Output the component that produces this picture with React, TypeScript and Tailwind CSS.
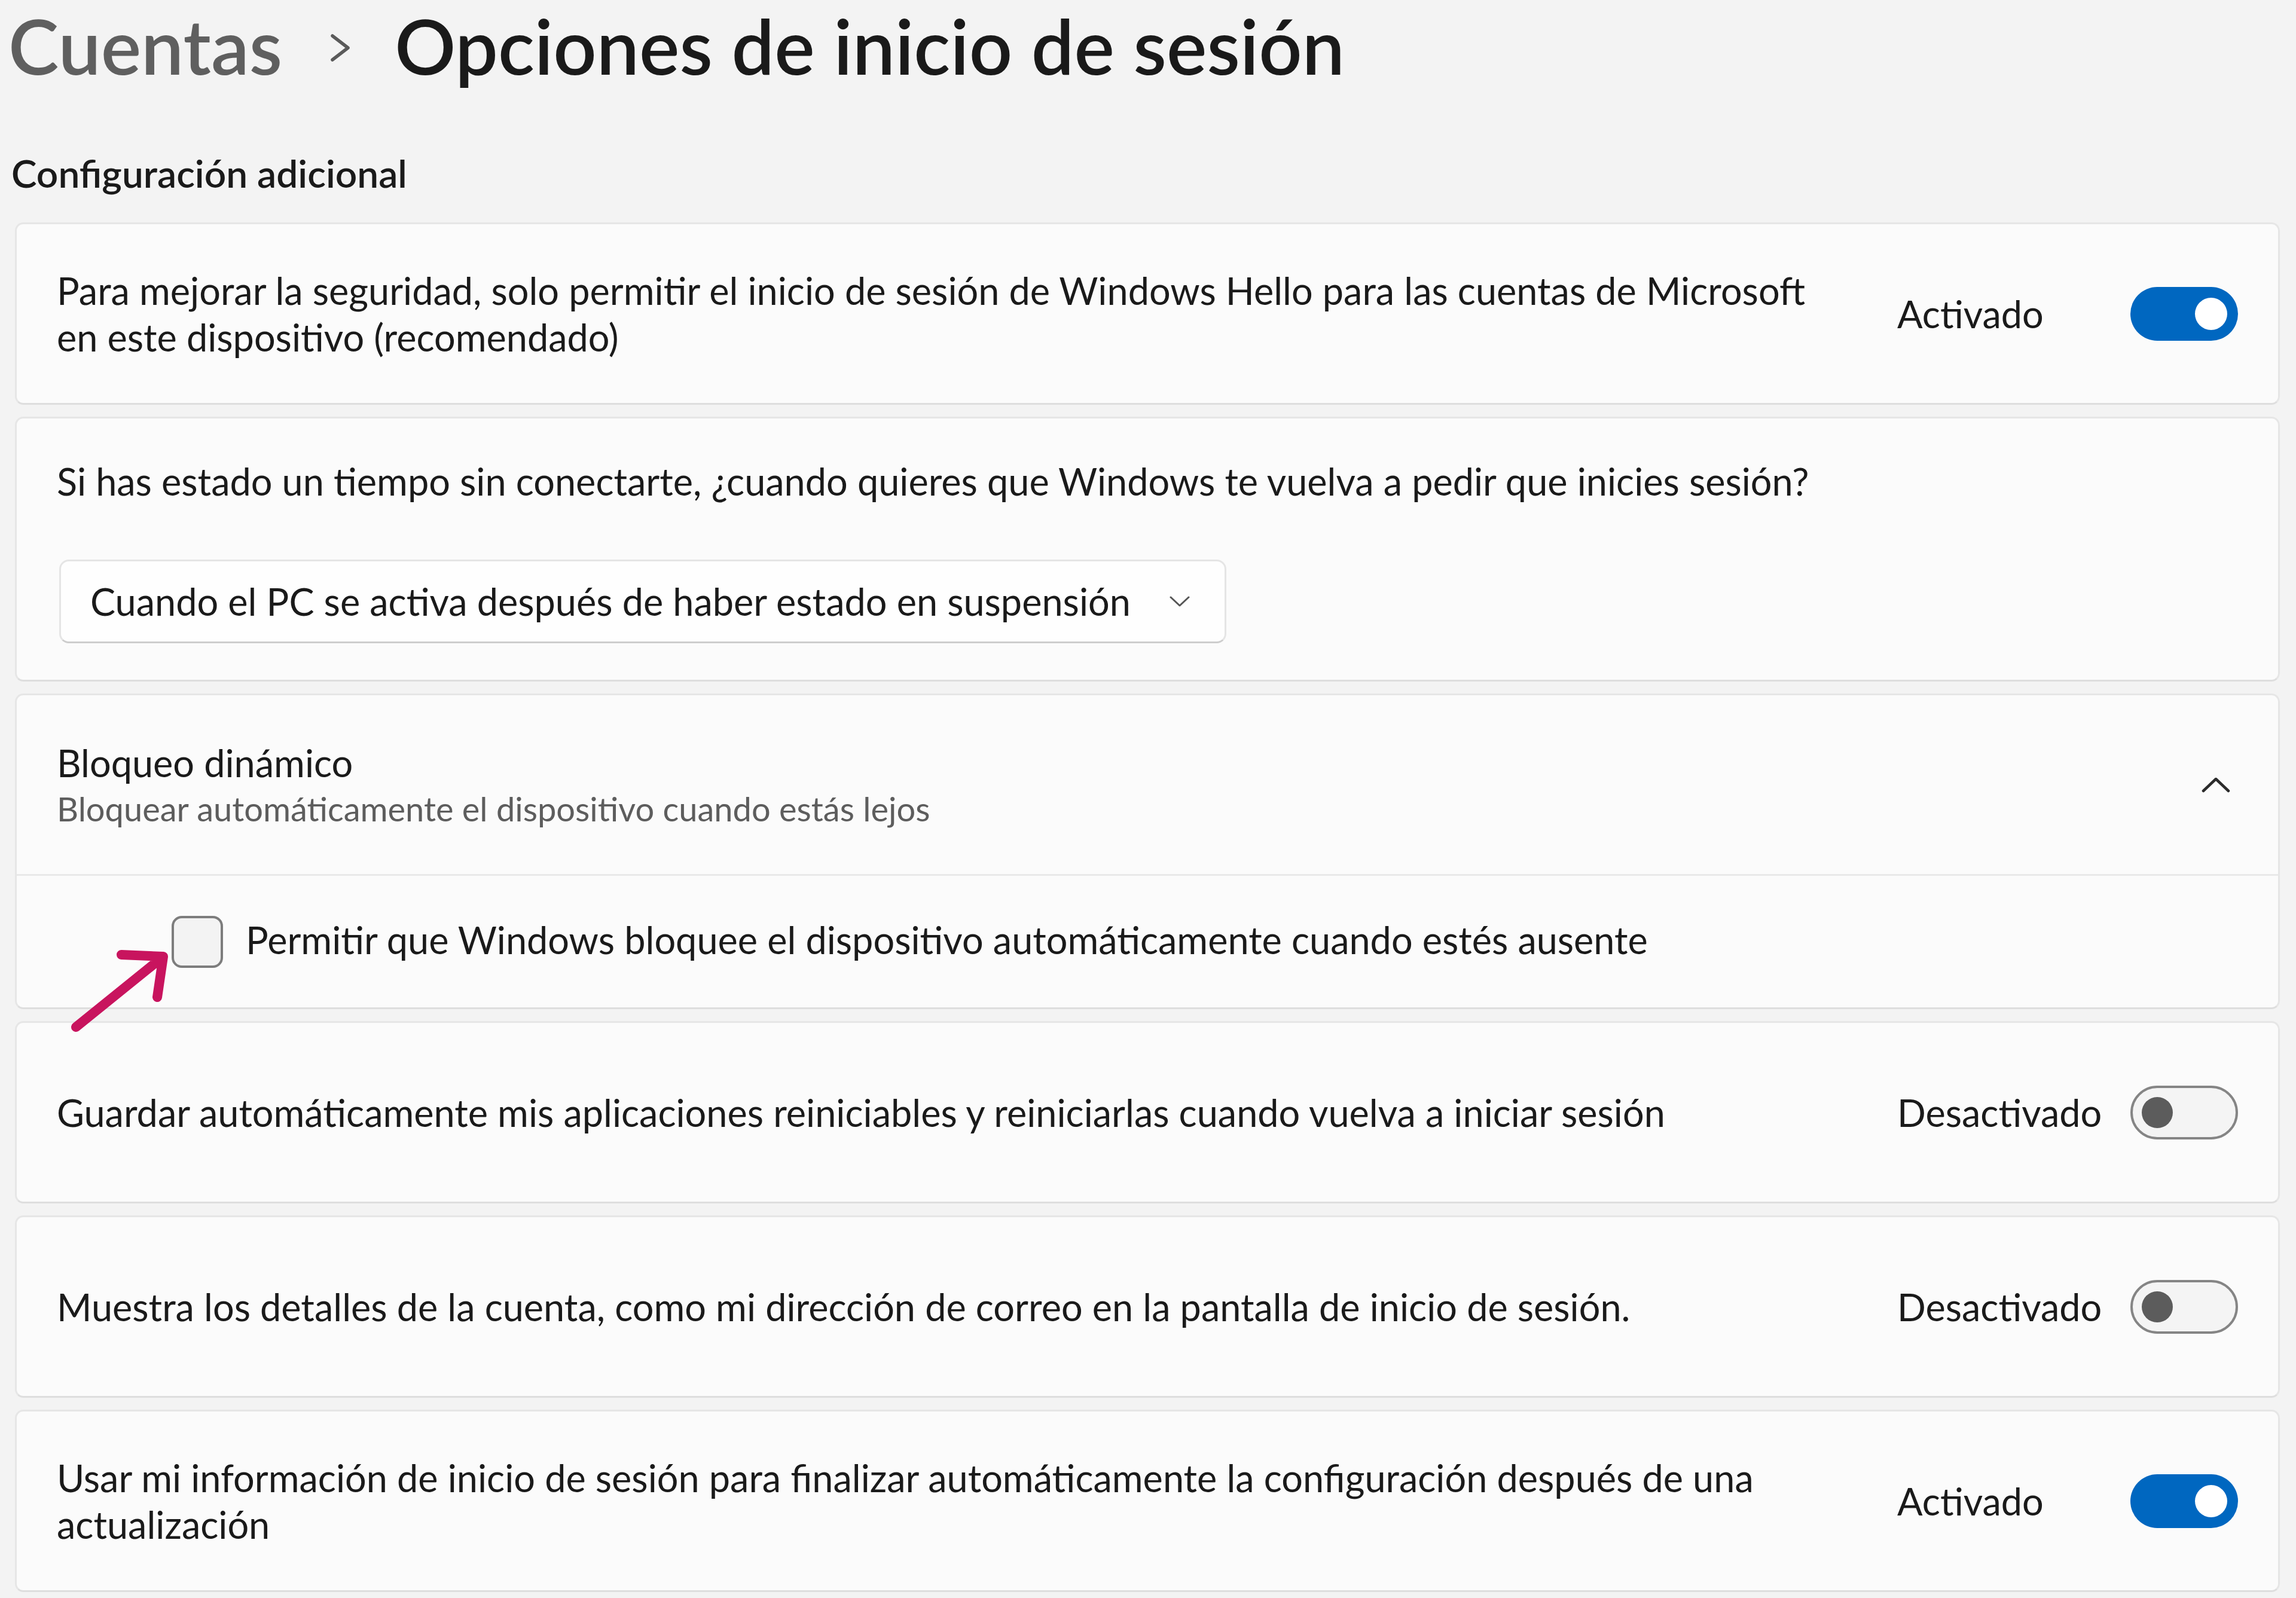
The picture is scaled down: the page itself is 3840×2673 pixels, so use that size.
function Toggle({ on }: { on: boolean }) {
  if (on) {
    return (
      <div className="flex h-[90px] w-[180px] items-center justify-end rounded-full bg-[#0067c0] pr-[18px]">
        <div className="h-[54px] w-[54px] rounded-full bg-white" />
      </div>
    )
  }
  return (
    <div className="flex h-[90px] w-[180px] items-center rounded-full border-[4px] border-[#858585] bg-[#f4f4f4] pl-[15px]">
      <div className="h-[52px] w-[52px] rounded-full bg-[#5c5c5c]" />
    </div>
  )
}

function ToggleCard({ text, on }: { text: string; on: boolean }) {
  return (
    <div className="flex h-[305px] items-center rounded-[14px] border-[3px] border-[#e6e6e6] border-b-[#dedede] bg-[#fbfbfb] pl-[67px] pr-[67px]">
      <p className="mr-[108px] flex-1 text-[63px] leading-[78px]">{text}</p>
      <div className="flex w-[570px] items-center justify-between">
        <span className="text-[63px] leading-[78px]">{on ? 'Activado' : 'Desactivado'}</span>
        <Toggle on={on} />
      </div>
    </div>
  )
}

export default function App() {
  return (
    <div className="relative min-h-screen bg-[#f3f3f3] font-['Lato','Noto_Sans',sans-serif] text-[#1a1a1a]">
      {/* Breadcrumb header */}
      <div className="flex h-[152px] items-center pl-[14px]">
        <span className="text-[127px] font-semibold leading-[152px] text-[#5f5f5f]">Cuentas</span>
        <svg className="mb-[-8px] ml-[80px] mr-[74px] h-[46px] w-[34px]" viewBox="0 0 34 46" fill="none">
          <path d="M4 3 L30 23 L4 43" stroke="#5a5a5a" strokeWidth="5.5" strokeLinecap="round" strokeLinejoin="round" />
        </svg>
        <span className="text-[127px] font-semibold leading-[152px]">Opciones de inicio de sesión</span>
      </div>

      <h2 className="mt-[93px] pl-[19px] text-[64px] font-semibold leading-[90px]">Configuración adicional</h2>

      <div className="ml-[25px] mr-[27px] mt-[37px] flex flex-col gap-[20px]">
        <ToggleCard
          on
          text="Para mejorar la seguridad, solo permitir el inicio de sesión de Windows Hello para las cuentas de Microsoft en este dispositivo (recomendado)"
        />

        {/* Sign-in again */}
        <div className="rounded-[14px] border-[3px] border-[#e6e6e6] border-b-[#dedede] bg-[#fbfbfb] pb-[61px] pl-[67px] pr-[67px] pt-[66px]">
          <p className="text-[63px] leading-[78px]">
            Si has estado un tiempo sin conectarte, ¿cuando quieres que Windows te vuelva a pedir que inicies sesión?
          </p>
          <div className="ml-[4px] mt-[92px] flex h-[140px] w-[1952px] items-center rounded-[16px] border-[3px] border-[#e5e5e5] border-b-[#cdcdcd] bg-[#fefefe] pl-[49px] pr-[58px]">
            <span className="flex-1 text-[63px] leading-[78px]">
              Cuando el PC se activa después de haber estado en suspensión
            </span>
            <svg className="h-[18px] w-[34px]" viewBox="0 0 34 18" fill="none">
              <path d="M2 2 L17 16 L32 2" stroke="#555555" strokeWidth="3" strokeLinecap="round" strokeLinejoin="round" />
            </svg>
          </div>
        </div>

        {/* Dynamic lock expander */}
        <div className="overflow-hidden rounded-[14px] border-[3px] border-[#e6e6e6] border-b-[#dedede] bg-[#fbfbfb]">
          <div className="flex h-[299px] items-center pl-[67px] pr-[80px]">
            <div className="flex-1">
              <p className="text-[63px] leading-[78px]">Bloqueo dinámico</p>
              <p className="mt-[3px] text-[56px] leading-[70px] text-[#5d5d5d]">
                Bloquear automáticamente el dispositivo cuando estás lejos
              </p>
            </div>
            <svg className="h-[26px] w-[48px]" viewBox="0 0 48 26" fill="none">
              <path d="M3 23 L24 3 L45 23" stroke="#2b2b2b" strokeWidth="4.5" strokeLinecap="round" strokeLinejoin="round" />
            </svg>
          </div>
          <div className="h-[3px] bg-[#e9e9e9]" />
          <div className="flex h-[220px] items-center pl-[259px]">
            <div className="h-[87px] w-[86px] rounded-[17px] border-[4px] border-[#7d7d7d] bg-[#f3f3f3]" />
            <span className="ml-[38px] mt-[-6px] text-[63px] leading-[78px]">
              Permitir que Windows bloquee el dispositivo automáticamente cuando estés ausente
            </span>
          </div>
        </div>

        <ToggleCard
          on={false}
          text="Guardar automáticamente mis aplicaciones reiniciables y reiniciarlas cuando vuelva a iniciar sesión"
        />
        <ToggleCard
          on={false}
          text="Muestra los detalles de la cuenta, como mi dirección de correo en la pantalla de inicio de sesión."
        />
        <ToggleCard
          on
          text="Usar mi información de inicio de sesión para finalizar automáticamente la configuración después de una actualización"
        />
      </div>

      {/* Annotation arrow pointing at the checkbox */}
      <svg className="absolute left-[110px] top-[1580px] h-[160px] w-[180px]" viewBox="0 0 180 160" fill="none">
        <path
          d="M17 138 L163 20 M93 17 L163 20 L153 88"
          stroke="#c8145e"
          strokeWidth="16"
          strokeLinecap="round"
          strokeLinejoin="round"
        />
      </svg>
    </div>
  )
}
